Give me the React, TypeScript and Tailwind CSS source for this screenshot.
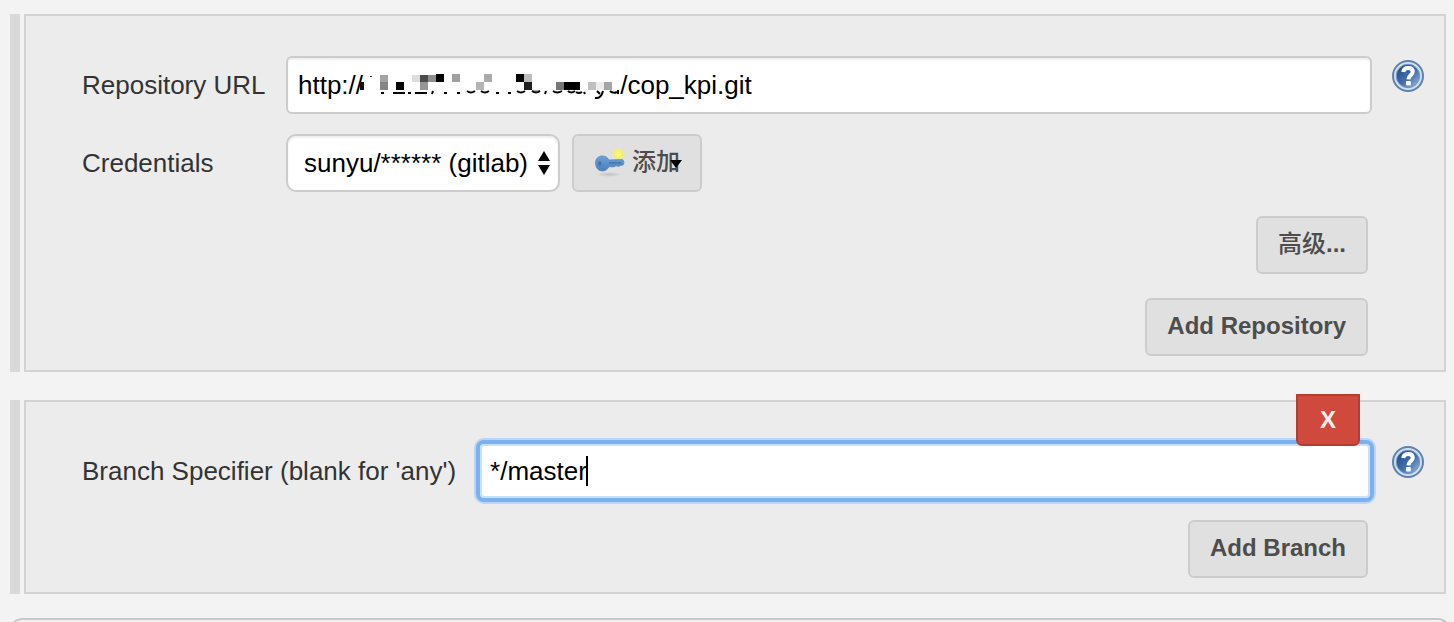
import type { ReactNode } from "react";

const BUTTON =
  "h-[58px] rounded-md border-2 border-[#cccccc] bg-[#e0e0e0] px-5 pb-0.5 font-['Liberation_Sans','Noto_Sans_CJK_SC',sans-serif] text-2xl font-bold text-[#4d4d4d]";

function HelpButton({ label }: { label: string }) {
  return (
    <button type="button" aria-label={label} className="mt-1 ml-5 size-8 shrink-0 self-start">
      <svg viewBox="0 0 32 32" className="size-8">
        <defs>
          <linearGradient id="help-fill" x1="0" y1="0" x2="1" y2="1">
            <stop offset="0.15" stopColor="#274f8f" />
            <stop offset="0.55" stopColor="#4470ac" />
            <stop offset="1" stopColor="#a3c0e2" />
          </linearGradient>
        </defs>
        <circle cx="16" cy="16" r="15" fill="#cfdff0" stroke="#5f82ac" strokeWidth="2" />
        <circle cx="16" cy="16" r="11.7" fill="url(#help-fill)" stroke="#6f94c0" strokeWidth="1" />
        <path
          d="M11.2 12C11.6 9.2 13.2 8 16.2 8C19.2 8 20.8 9.4 20.8 11.8C20.8 14.8 16.6 15.200 16.400 19.400"
          fill="none"
          stroke="#ffffff"
          strokeWidth="4"
        />
        <rect x="14" y="21" width="4.8" height="4.6" rx="0.8" fill="#ffffff" />
      </svg>
    </button>
  );
}

function KeyIcon() {
  return (
    <svg viewBox="0 0 32 32" className="size-8 shrink-0" aria-hidden="true">
      <defs>
        <radialGradient id="key-glow">
          <stop offset="0" stopColor="#fffb78" />
          <stop offset="0.6" stopColor="#f5ee72" />
          <stop offset="1" stopColor="#f5ee72" stopOpacity="0" />
        </radialGradient>
        <radialGradient id="key-shadow">
          <stop offset="0" stopColor="#c0c0c0" />
          <stop offset="1" stopColor="#c0c0c0" stopOpacity="0" />
        </radialGradient>
        <linearGradient id="key-body" x1="0" y1="0" x2="0" y2="1">
          <stop offset="0" stopColor="#6fa0d4" />
          <stop offset="1" stopColor="#4a7fbd" />
        </linearGradient>
      </defs>
      <ellipse cx="15" cy="28.5" rx="13" ry="2.5" fill="url(#key-shadow)" />
      <circle cx="24.5" cy="8" r="6.8" fill="url(#key-glow)" />
      <path
        d="M1.500 17C1.500 12.500 4.500 10 8.500 10C11.500 10 13.500 11.500 15 14L28.500 13.500C30.300 14.500 30.300 17.500 29 19L26.500 19.500L24.500 20.500L22 19.700L20 20.900L15 20.700C13.500 23.500 11 25 8.500 25C4.500 25 1.500 22 1.500 17Z"
        fill="url(#key-body)"
        stroke="#5c8cc4"
        strokeWidth="0.8"
      />
      <ellipse cx="5.8" cy="17.500" rx="1.600" ry="2.200" fill="#4470a6" />
      <path d="M15 16.900H27.500" stroke="#4673a6" strokeWidth="1.400" />
    </svg>
  );
}

const MOSAIC: [number, number, number, number, string][] = [
  [380, 75, 8, 8, "#a3a3a3"],
  [380, 82, 8, 8, "#848484"],
  [396, 82, 8, 8, "#000000"],
  [412, 75, 8, 7, "#dcdcdc"],
  [420, 75, 8, 7, "#4c4c4c"],
  [420, 82, 8, 8, "#969696"],
  [428, 75, 8, 7, "#8e8e8e"],
  [436, 74, 8, 8, "#000000"],
  [452, 74, 8, 8, "#a0a0a0"],
  [476, 82, 8, 8, "#b4b4b4"],
  [484, 74, 8, 8, "#ababab"],
  [516, 74, 8, 8, "#050505"],
  [524, 74, 8, 8, "#bdbdbd"],
  [524, 82, 8, 8, "#202020"],
  [532, 90, 8, 2, "#a6a6a6"],
  [556, 82, 8, 8, "#777777"],
  [564, 82, 16, 8, "#000000"],
  [588, 82, 8, 8, "#c0c0c0"],
  [596, 82, 8, 8, "#ededed"],
  [604, 82, 8, 8, "#a5a5a5"],
];

function Mosaic() {
  return (
    <svg
      viewBox="360 70 262 32"
      className="pointer-events-none absolute top-[14px] left-[74px] h-8 w-[262px]"
      aria-hidden="true"
    >
      {MOSAIC.map(([x, y, w, h, fill]) => (
        <rect key={`${x}-${y}`} x={x} y={y} width={w} height={h} fill={fill} />
      ))}
      <rect x="360" y="82" width="4" height="8" fill="#111111" />
      <rect x="370" y="76" width="2" height="1" fill="#333333" />
      <g fill="none" stroke="#000000" strokeWidth="2">
        <path d="M381 93h3M393 93h12M408 93h3M415 93h12M433 91l-1 3M444 93h3M457 93h3M496 93h3M508 93h3" />
        <path d="M467 91q4 3 8 0M481 91q4 3 8 0M517 91q4 3 8 0M532 91q4 3 8 0M546 91l-1 3M553 91q4 3 9 0M568 91q3 3 7 0M576 92q3 2 6 0M584 92l1 2" />
        <path d="M603 91q-2 8-8 7M597 91l3 3M610 91q3 3 7 1M618 90v4" />
      </g>
    </svg>
  );
}

function Section({ children }: { children: ReactNode }) {
  return (
    <section className="flex gap-1">
      <div className="w-[10px] shrink-0 cursor-move bg-[#d9d9d9]" />
      <div className="relative min-w-0 flex-1 border-2 border-[#d3d3d3] bg-[#ececec] pt-10 pr-5 pb-[14px] pl-14">
        {children}
      </div>
    </section>
  );
}

const REPOSITORY_URL = "http://" + "\u00a0".repeat(35) + "\u200a\u200a/cop_kpi.git";

export default function App() {
  return (
    <main className="flex h-screen flex-col gap-7 overflow-hidden bg-[#f3f3f3] pt-[14px] pr-2 pl-[10px] font-['Liberation_Sans','Noto_Sans_CJK_SC',sans-serif] text-[26px] leading-8 text-[#333333]">
      <Section>
        <div className="flex items-center">
          <label htmlFor="repo-url" className="w-[204px] shrink-0">
            Repository URL
          </label>
          <div className="relative min-w-0 flex-1">
            <input
              id="repo-url"
              type="text"
              defaultValue={REPOSITORY_URL}
              className="block h-[58px] w-full rounded-md border-2 border-[#cccccc] bg-white px-[10px] text-black shadow-[inset_0_2px_2px_rgba(0,0,0,0.07)] outline-none"
            />
            <Mosaic />
          </div>
          <HelpButton label="Help for Repository URL" />
        </div>
        <div className="mt-5 flex items-center">
          <label htmlFor="credentials" className="w-[204px] shrink-0">
            Credentials
          </label>
          <div className="relative">
            <select
              id="credentials"
              className="block h-[58px] w-[274px] appearance-none rounded-[10px] border-2 border-[#cccccc] bg-white pl-4 text-black shadow-[inset_0_2px_2px_rgba(0,0,0,0.07)] outline-none"
            >
              <option>sunyu/****** (gitlab)</option>
            </select>
            <svg
              viewBox="0 0 12 24"
              className="pointer-events-none absolute top-[17px] right-[10px] h-6 w-3"
              aria-hidden="true"
            >
              <path d="M6 0L12 10H0ZM6 24L0 14H12Z" fill="#000000" />
            </svg>
          </div>
          <button type="button" className={`${BUTTON} relative ml-3 flex w-[130px] items-center gap-1.5`}>
            <KeyIcon />
            <span className="whitespace-nowrap font-medium">添加</span>
            <svg viewBox="0 0 12 8" className="absolute top-6 right-[18px] h-2 w-3" aria-hidden="true">
              <path d="M0 0H12L6 8Z" fill="#000000" />
            </svg>
          </button>
        </div>
        <div className="mt-6 mr-14 flex flex-col items-end gap-6">
          <button type="button" className={BUTTON}>
            <span className="font-medium">高级</span>...
          </button>
          <button type="button" className={BUTTON}>
            Add Repository
          </button>
        </div>
      </Section>

      <Section>
        <button
          type="button"
          aria-label="X"
          className="absolute -top-2 right-[84px] z-10 h-[52px] w-16 rounded-b-md border-2 border-[#b43c31] bg-[#d0493d] text-2xl font-bold text-[#f8f0ef]"
        >
          X
        </button>
        <div className="flex items-center">
          <label htmlFor="branch" className="mr-[22px] shrink-0">
            Branch Specifier (blank for 'any')
          </label>
          <div className="relative min-w-0 flex-1">
            <input
              id="branch"
              type="text"
              defaultValue="*/master"
              className="block h-[58px] w-full rounded-md border-2 border-[#7ab1f0] bg-white px-[10px] text-black shadow-[0_0_0_2px_#7ab1f0,0_0_0_4px_#bad6f4,inset_0_0_0_2px_#c9e0f9] outline-none"
            />
            <span className="pointer-events-none absolute top-[14px] left-[108px] h-[30px] w-0.5 bg-black" />
          </div>
          <HelpButton label="Help for Branch Specifier" />
        </div>
        <div className="mt-5 mr-14 flex justify-end">
          <button type="button" className={BUTTON}>
            Add Branch
          </button>
        </div>
      </Section>

      <div className="-mt-1 -mr-1 h-8 shrink-0 rounded-xl border-2 border-[#c8c8c8]" />
    </main>
  );
}
